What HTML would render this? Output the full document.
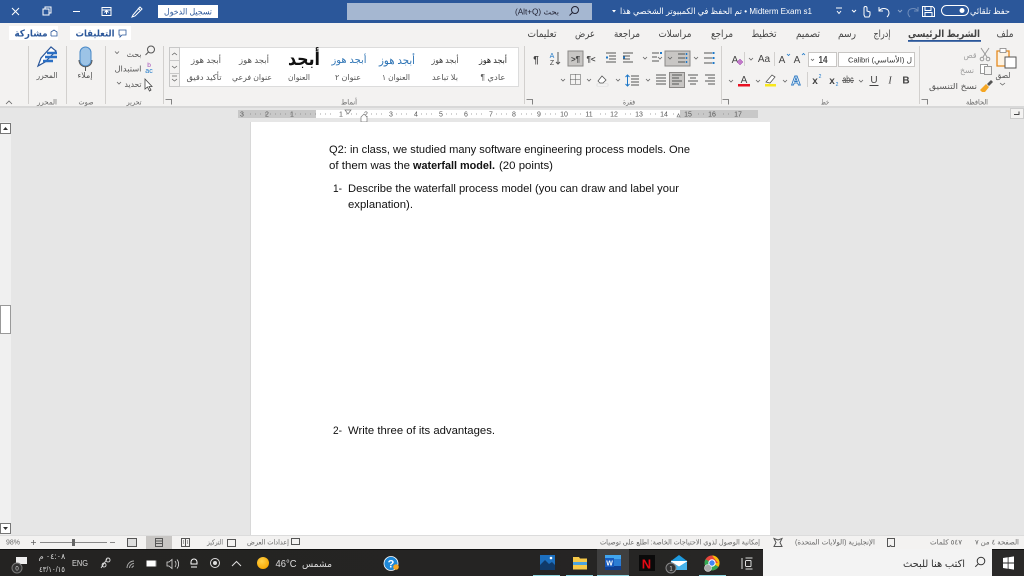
<!DOCTYPE html>
<html><head><meta charset="utf-8"><style>
html,body{margin:0;padding:0;width:1024px;height:576px;overflow:hidden;background:#e6e6e6}
svg{display:block;font-family:"Liberation Sans","DejaVu Sans",sans-serif;filter:blur(.3px)}
.m{text-anchor:middle}
.g{fill:#555;font-size:8px}
.d{fill:#444;font-size:9px}
.tab{fill:#444;font-size:10px;text-anchor:middle}
.doc{fill:#111;font-size:11px}
.s{fill:#666;font-size:7px;text-anchor:middle}
.r{fill:#555;font-size:7px;text-anchor:middle}
.ic{fill:none;stroke:#555;stroke-width:1}
.w{fill:none;stroke:#fff;stroke-width:1}
.c{fill:none;stroke:#666;stroke-width:.8}
.f{fill:#444;font-size:10px;text-anchor:middle}
</style></head><body>
<svg width="1024" height="576" viewBox="0 0 1024 576" xmlns="http://www.w3.org/2000/svg">
<rect width="1024" height="576" fill="#e6e6e6"/>
<!-- title bar -->
<rect width="1024" height="23" fill="#2b579a"/>
<path class="w" d="M12 8l7 7M19 8l-7 7"/>
<path class="w" d="M43 9h6v6h-6zM45 9V7h6v6h-2"/>
<path class="w" d="M73 11.500h7"/>
<path class="w" d="M102 7.500h9v8h-9zM102 10h9M106.500 14v-3M104.500 12.500l2-2 2 2"/>
<path class="w" d="M133 15l7-8 2 2-7 7-3 1zM138 8l2 2"/>
<rect x="158" y="5" width="60" height="13" fill="#fff"/>
<text x="188" y="14.500" class="m" font-size="8.500" fill="#2b579a" textLength="48" lengthAdjust="spacingAndGlyphs">تسجيل الدخول</text>
<rect x="347" y="3" width="245" height="17" fill="#a5b7d1"/>
<text x="537" y="14.500" class="m" font-size="8" fill="#223" textLength="44" lengthAdjust="spacingAndGlyphs">(Alt+Q) بحث</text>
<circle cx="575" cy="10" r="3.500" fill="none" stroke="#223"/><path d="M572.500 12.500l-3 3" stroke="#223" fill="none"/>
<path d="M612 10h4l-2 2.500z" fill="#fff"/>
<text x="716" y="14" class="m" font-size="8.500" fill="#fff" textLength="192" lengthAdjust="spacingAndGlyphs">تم الحفظ في الكمبيوتر الشخصي هذا • Midterm Exam s1</text>
<path class="w" d="M836 8h6M837 11l2 2.500 2-2.500M852 10l2 2 2-2"/>
<path class="w" d="M864 15v-7a1.500 1.500 0 0 1 3 0v3l3 1v3l-1 2h-4z"/>
<path class="w" d="M879 7v4h4M879 11c3-4 10-3 10 2 0 2-1 3-2 4"/>
<path d="M898 10l2 2 2-2" fill="none" stroke="#8aa3c8"/>
<path d="M918 7v4h-4M918 11c-3-4-10-3-10 2 0 2 1 3 2 4" fill="none" stroke="#6f8dbb"/>
<path class="w" d="M922.500 6.500h10l2 2v8h-12zM925 6.500v4h6v-4M925 16.500v-4h7v4"/>
<rect x="941.500" y="5.500" width="27" height="10" rx="5" fill="none" stroke="#fff"/>
<circle cx="962" cy="10.500" r="2.500" fill="#fff"/>
<text x="990" y="14" class="m" font-size="8.500" fill="#fff" textLength="40" lengthAdjust="spacingAndGlyphs">حفظ تلقائي</text>
<!-- ribbon -->
<rect y="23" width="1024" height="83" fill="#f3f2f1"/>
<rect y="106" width="1024" height="2" fill="#d8d8d8"/>
<rect x="9" y="26" width="49" height="14" fill="#fff"/>
<rect x="70" y="26" width="61" height="14" fill="#fff"/>
<text x="31" y="36.500" class="m" font-size="9.500" font-weight="bold" fill="#2b579a" textLength="33" lengthAdjust="spacingAndGlyphs">مشاركة</text>
<path d="M51 36v-4l3-2 3 2v4h-6" fill="none" stroke="#2b579a" stroke-width=".8"/>
<text x="95" y="36.500" class="m" font-size="9.500" font-weight="bold" fill="#2b579a" textLength="39" lengthAdjust="spacingAndGlyphs">التعليقات</text>
<path d="M119 30h7v5h-4l-2 2v-2h-1z" fill="none" stroke="#2b579a" stroke-width=".8"/>
<text x="1005" y="37" class="tab" textLength="17" lengthAdjust="spacingAndGlyphs">ملف</text>
<text x="944" y="37" class="tab" font-weight="bold" fill="#333" textLength="72" lengthAdjust="spacingAndGlyphs">الشريط الرئيسي</text>
<rect x="908" y="40" width="73" height="1.800" fill="#2b579a"/>
<text x="882" y="37" class="tab" textLength="17" lengthAdjust="spacingAndGlyphs">إدراج</text>
<text x="847" y="37" class="tab" textLength="18" lengthAdjust="spacingAndGlyphs">رسم</text>
<text x="808" y="37" class="tab" textLength="24" lengthAdjust="spacingAndGlyphs">تصميم</text>
<text x="764" y="37" class="tab" textLength="25" lengthAdjust="spacingAndGlyphs">تخطيط</text>
<text x="722" y="37" class="tab" textLength="22" lengthAdjust="spacingAndGlyphs">مراجع</text>
<text x="675" y="37" class="tab" textLength="33" lengthAdjust="spacingAndGlyphs">مراسلات</text>
<text x="627" y="37" class="tab" textLength="26" lengthAdjust="spacingAndGlyphs">مراجعة</text>
<text x="585" y="37" class="tab" textLength="20" lengthAdjust="spacingAndGlyphs">عرض</text>
<text x="542" y="37" class="tab" textLength="29" lengthAdjust="spacingAndGlyphs">تعليمات</text>
<!-- separators -->
<path d="M28.500 46v58M66.500 46v58M105.500 46v58M163.500 46v58M524.500 46v58M721.500 46v58M919.500 46v58" stroke="#d2d0ce"/>
<!-- group labels -->
<text x="47" y="104.500" class="s" textLength="20" lengthAdjust="spacingAndGlyphs">المحرر</text>
<text x="86" y="104.500" class="s" textLength="15" lengthAdjust="spacingAndGlyphs">صوت</text>
<text x="134" y="104.500" class="s" textLength="15" lengthAdjust="spacingAndGlyphs">تحرير</text>
<text x="349" y="104.500" class="s" textLength="16" lengthAdjust="spacingAndGlyphs">أنماط</text>
<text x="629" y="104.500" class="s" textLength="12" lengthAdjust="spacingAndGlyphs">فقرة</text>
<text x="825" y="104.500" class="s" textLength="8" lengthAdjust="spacingAndGlyphs">خط</text>
<text x="977" y="104.500" class="s" textLength="22" lengthAdjust="spacingAndGlyphs">الحافظة</text>
<path d="M6 104l3-3 3 3" class="c"/>
<path class="c" d="M165.500 99.500h6v5M526.500 99.500h6v5M722.500 99.500h6v5M921.500 99.500h6v5"/>
<!-- editor -->
<path d="M38 66l3-8 10-11 5 4-11 11z" fill="#fff" stroke="#2b579a" stroke-width="1.200"/>
<path d="M47 53h10M45 57h12M43 61h10" stroke="#2b6fc4" stroke-width="2.500"/>
<text x="47" y="78" class="g m" textLength="21" lengthAdjust="spacingAndGlyphs">المحرر</text>
<!-- mic -->
<rect x="80" y="47" width="11" height="19" rx="5.500" fill="#9cc3e6" stroke="#4a8ac8"/>
<path d="M79 60c0 9 13 9 13 0M85.500 67v4" class="ic"/>
<text x="85" y="78" class="g m" textLength="15" lengthAdjust="spacingAndGlyphs">إملاء</text>
<!-- editing -->
<circle cx="151" cy="49.500" r="3.500" class="ic"/><path class="ic" d="M148.500 52l-3 3"/>
<text x="134" y="57" class="g m" textLength="15" lengthAdjust="spacingAndGlyphs">بحث</text>
<path class="c" d="M115 51.500l2 2 2-2M117 82l2 2 2-2"/>
<text x="128" y="71.500" class="g m" textLength="27" lengthAdjust="spacingAndGlyphs">استبدال</text>
<text x="149" y="67" class="m" font-size="6.500" fill="#a24bb5">b</text>
<text x="149" y="73" class="m" font-size="7" fill="#1e78c8">ac</text>
<text x="133" y="87" class="g m" textLength="17" lengthAdjust="spacingAndGlyphs">تحديد</text>
<path d="M145 79v10l2.500-2 2 4 1.500-1-2-3.500h3z" fill="#fff" stroke="#444" stroke-width=".8"/>
<!-- gallery -->
<rect x="169.500" y="47.500" width="349" height="39" fill="#fff" stroke="#dcdcdc"/>
<rect x="169.500" y="47.500" width="10" height="39" fill="#f3f2f1" stroke="#c8c8c8"/>
<path d="M169.500 60.500h10M169.500 73.500h10" stroke="#c8c8c8"/>
<path class="c" d="M172 55l2.500-2 2.500 2M172 66l2.500 2 2.500-2M172 76h5M172 79l2.500 2 2.500-2"/>
<g font-size="8.500">
<text x="493" y="63" class="m" fill="#222" textLength="28" lengthAdjust="spacingAndGlyphs">أبجد هوز</text>
<text x="445" y="63" class="m" fill="#444" textLength="27" lengthAdjust="spacingAndGlyphs">أبجد هوز</text>
<text x="397" y="64" class="m" fill="#2e74b5" font-size="11" textLength="36" lengthAdjust="spacingAndGlyphs">أبجد هوز</text>
<text x="349" y="63" class="m" fill="#2e74b5" font-size="9.500" textLength="35" lengthAdjust="spacingAndGlyphs">أبجد هوز</text>
<text x="304" y="65" class="m" fill="#111" font-size="18" font-weight="bold" textLength="32" lengthAdjust="spacingAndGlyphs">أبجد</text>
<text x="254" y="63" class="m" fill="#555" textLength="30" lengthAdjust="spacingAndGlyphs">أبجد هوز</text>
<text x="206" y="63" class="m" fill="#555" textLength="30" lengthAdjust="spacingAndGlyphs">أبجد هوز</text>
</g>
<text x="493" y="80" class="g m" textLength="25" lengthAdjust="spacingAndGlyphs">¶ عادي</text>
<text x="445" y="80" class="g m" textLength="26" lengthAdjust="spacingAndGlyphs">بلا تباعد</text>
<text x="396" y="80" class="g m" textLength="28" lengthAdjust="spacingAndGlyphs">العنوان ١</text>
<text x="348" y="80" class="g m" textLength="26" lengthAdjust="spacingAndGlyphs">عنوان ٢</text>
<text x="299" y="80" class="g m" textLength="22" lengthAdjust="spacingAndGlyphs">العنوان</text>
<text x="252" y="80" class="g m" textLength="40" lengthAdjust="spacingAndGlyphs">عنوان فرعي</text>
<text x="204" y="80" class="g m" textLength="35" lengthAdjust="spacingAndGlyphs">تأكيد دقيق</text>
<!-- paragraph row 1 -->
<text x="536" y="63" class="f" font-size="12" font-weight="bold">¶</text>
<text x="552" y="58" class="m" font-size="7" fill="#1e78c8">A</text>
<text x="552" y="65" class="m" font-size="7" fill="#444">Z</text>
<path class="ic" d="M558 52v12M556 62l2 2 2-2"/>
<rect x="568" y="51" width="15" height="15" fill="#c8c6c4" stroke="#8a8886"/>
<text x="575.500" y="62" class="m" font-size="8" font-weight="bold" fill="#444">&gt;¶</text>
<text x="591" y="62" class="m" font-size="8" font-weight="bold" fill="#444">¶&lt;</text>
<path class="ic" d="M606 53h10M609 56h7M609 59h7M606 62h10M633 53h-10M633 62h-10M630 56h-7M630 59h-7"/>
<path d="M606 57.500l2 0M623 57.500h2" stroke="#1e78c8" stroke-width="2"/>
<path class="c" d="M643 57l2 2 2-2M658 57l2 2 2-2M694 57l2 2 2-2"/>
<path class="ic" d="M652 53h7M652 57h5M652 61h7"/><rect x="660" y="52" width="2" height="2" fill="#1e78c8"/>
<rect x="665" y="51" width="25" height="15" fill="#c8c6c4" stroke="#8a8886"/>
<path class="c" d="M668 57l2 2 2-2"/><path class="ic" d="M678 54h7M678 58h7M678 62h7"/><path d="M686.500 53v10" stroke="#1e78c8" stroke-width="1.500" stroke-dasharray="2 2"/>
<path class="ic" d="M704 53h8M704 58h8M704 63h8"/><path d="M713.500 52v12" stroke="#1e78c8" stroke-width="2" stroke-dasharray="2 3"/>
<!-- paragraph row 2 -->
<path class="c" d="M561 79l2 2 2-2M587 79l2 2 2-2M616 79l2 2 2-2M646 79l2 2 2-2"/>
<path class="ic" d="M570.500 74.500h10v10h-10zM575.500 74.500v10M570.500 79.500h10" stroke-dasharray="1 1"/>
<path d="M598 81l4-5 4 4-3 3h-3z" fill="#fff" stroke="#555" stroke-width=".8"/><rect x="597" y="84" width="11" height="2" fill="#fff" stroke="#ccc" stroke-width=".5"/>
<path class="ic" d="M631 76h8M631 79h8M631 82h8M631 85h8"/><path d="M627.500 75v11M625.500 77l2-2 2 2M625.500 84l2 2 2-2" fill="none" stroke="#1e78c8"/>
<path class="ic" d="M656 75h10M656 78h10M656 81h10M656 84h10"/>
<rect x="669.500" y="72.500" width="15" height="15" fill="#c8c6c4" stroke="#8a8886"/>
<path class="ic" d="M672 75h10M672 78h7M672 81h10M672 84h7M688 75h10M690 78h6M688 81h10M690 84h6M705 75h10M708 78h7M705 81h10M708 84h7"/>
<!-- font -->
<path class="c" d="M729 80l2 2 2-2M756 80l2 2 2-2M783 80l2 2 2-2M859 80l2 2 2-2M749 58l2 2 2-2"/>
<text x="735" y="63" class="f" font-size="12" fill="#555">A</text>
<path d="M737 62l3-3 3 3-3 3z" fill="#c27ac9" stroke="#a24bb5" stroke-width=".5"/>
<path d="M744.500 52v14M774.500 52v14M807.500 72v15" stroke="#d2d0ce"/>
<text x="764" y="62" class="f">Aa</text>
<text x="782" y="63" class="f" font-size="11">A</text>
<text x="797" y="63" class="f" font-size="13">A</text>
<path d="M787 54l1.500 1.500 1.500-1.500M802 55l1.500-1.500 1.500 1.500" fill="none" stroke="#1e78c8" stroke-width=".8"/>
<rect x="808.500" y="52.500" width="28" height="14" fill="#fff" stroke="#c8c6c4"/>
<path class="c" d="M811 59l1.500 1.500 1.500-1.500M841 59l1.500 1.500 1.500-1.500"/>
<text x="823" y="63" class="f" font-size="8.500" font-weight="bold" textLength="9" lengthAdjust="spacingAndGlyphs">14</text>
<rect x="838.500" y="52.500" width="76" height="14" fill="#fff" stroke="#c8c6c4"/>
<text x="880" y="62.500" class="m" font-size="7.500" fill="#333" textLength="64" lengthAdjust="spacingAndGlyphs">Calibri (الأساسي) ل</text>
<text x="744" y="83" class="f" font-size="10">A</text><rect x="738" y="84" width="12" height="2.500" fill="#e81123"/>
<path d="M766 82l6-7 3 2-5 6z" fill="#fff" stroke="#555" stroke-width=".8"/><rect x="765" y="84" width="11" height="2.500" fill="#f8e71c"/>
<text x="796" y="85" class="m" font-size="13" font-weight="bold" fill="#fff" stroke="#2b78c2" stroke-width=".9">A</text>
<text x="815" y="84" class="f" font-size="9" font-weight="bold">x</text><text x="820" y="78" class="m" font-size="5" fill="#1e78c8">2</text>
<text x="832" y="84" class="f" font-size="9" font-weight="bold">x</text><text x="837" y="86" class="m" font-size="5" fill="#1e78c8">2</text>
<text x="848" y="83" class="f" font-size="7.500" fill="#666" textLength="11" lengthAdjust="spacingAndGlyphs">abc</text><path d="M842 80.500h12" stroke="#666"/>
<text x="874" y="83" class="f" font-size="9.500">U</text><path d="M869.500 85.500h9" stroke="#444"/>
<text x="890" y="83.500" class="f" font-style="italic" font-family="Liberation Serif">I</text>
<text x="906" y="83.500" class="f" font-weight="bold">B</text>
<!-- clipboard -->
<path d="M997 51h12v15h-12z" fill="#fdf3e3" stroke="#e58a1f" stroke-width="1.300"/><rect x="1000" y="48.500" width="6" height="4" fill="#fff" stroke="#777" stroke-width=".7"/>
<rect x="1005" y="57" width="11" height="11" fill="#fff" stroke="#555"/>
<text x="1003" y="78" class="g m" textLength="15" lengthAdjust="spacingAndGlyphs">لصق</text>
<path class="c" d="M1000 83l2.500 2 2.500-2"/>
<path d="M981 48l6 9M989 48l-6 9" fill="none" stroke="#999"/><circle cx="982" cy="59" r="1.800" fill="none" stroke="#999"/><circle cx="988" cy="59" r="1.800" fill="none" stroke="#999"/>
<text x="970" y="58" class="g m" style="fill:#a0a0a0" textLength="13" lengthAdjust="spacingAndGlyphs">قص</text>
<rect x="980.500" y="64.500" width="7" height="9" fill="#fff" stroke="#999"/><rect x="984.500" y="66.500" width="7" height="8" fill="#f3f2f1" stroke="#999"/>
<text x="967" y="73" class="g m" style="fill:#a0a0a0" textLength="14" lengthAdjust="spacingAndGlyphs">نسخ</text>
<path d="M980 90l6-6 3 3-4 5h-3z" fill="#f5a623"/><path d="M987 84l4-4 2 2-4 4z" fill="#555"/>
<text x="953" y="89" class="g m" textLength="48" lengthAdjust="spacingAndGlyphs">نسخ التنسيق</text>
<!-- ruler -->
<rect x="238" y="110" width="78" height="8" fill="#c8c8c8"/>
<rect x="316" y="110" width="364" height="8" fill="#fff"/>
<rect x="680" y="110" width="78" height="8" fill="#c8c8c8"/>
<g>
<text class="r" x="242" y="116.500">3</text><text class="r" x="267" y="116.500">2</text><text class="r" x="292" y="116.500">1</text>
<text class="r" x="341" y="116.500">1</text><text class="r" x="366" y="116.500">2</text><text class="r" x="391" y="116.500">3</text><text class="r" x="416" y="116.500">4</text><text class="r" x="441" y="116.500">5</text><text class="r" x="466" y="116.500">6</text><text class="r" x="491" y="116.500">7</text><text class="r" x="514" y="116.500">8</text><text class="r" x="539" y="116.500">9</text><text class="r" x="564" y="116.500">10</text><text class="r" x="589" y="116.500">11</text><text class="r" x="614" y="116.500">12</text><text class="r" x="639" y="116.500">13</text><text class="r" x="664" y="116.500">14</text><text class="r" x="688" y="116.500">15</text><text class="r" x="712" y="116.500">16</text><text class="r" x="738" y="116.500">17</text>
</g>
<path d="M250 114h85M346 114h15M371 114h15M396 114h15M421 114h15M446 114h15M471 114h15M496 114h15M521 114h15M545 114h15M575 114h10M600 114h10M625 114h10M650 114h8M673 114h10M698 114h10M723 114h10" stroke="#888" stroke-width=".7" stroke-dasharray="1 4"/>
<path d="M345 110h6l-3 4z" fill="#fff" stroke="#777" stroke-width=".7"/>
<path d="M361 117l3-3 3 3v5h-6z" fill="#fff" stroke="#777" stroke-width=".7"/>
<path d="M680 117l-3-.1 1.500-3 1.500 3z" fill="#fff" stroke="#777" stroke-width=".7"/>
<rect x="1010.500" y="108.500" width="13" height="10" fill="#f3f2f1" stroke="#ccc"/><path d="M1014 114.500h5v-3" fill="none" stroke="#444"/>
<!-- page -->
<rect x="250" y="122" width="520" height="413" fill="#fff"/>
<rect x="250" y="122" width="1" height="413" fill="#d8d8d8"/>
<!-- left scroll -->
<rect x="0" y="122" width="11" height="413" fill="#f0f0f0"/>
<rect x="0.500" y="123.500" width="10" height="10" fill="#fff" stroke="#777"/><path d="M3 130l2.500-3 2.500 3z" fill="#333"/>
<rect x="0.500" y="305.500" width="10" height="28" fill="#fff" stroke="#999"/>
<rect x="0.500" y="523.500" width="10" height="10" fill="#fff" stroke="#777"/><path d="M3 527l2.500 3 2.500-3z" fill="#333"/>
<!-- doc text -->
<text x="329" y="153" class="doc" textLength="361" lengthAdjust="spacingAndGlyphs">Q2: in class, we studied many software engineering process models. One</text>
<text x="329" y="169" class="doc" textLength="81" lengthAdjust="spacingAndGlyphs">of them was the</text>
<text x="413" y="169" class="doc" font-weight="bold" textLength="82" lengthAdjust="spacingAndGlyphs">waterfall model.</text>
<text x="499" y="169" class="doc" textLength="54" lengthAdjust="spacingAndGlyphs">(20 points)</text>
<text x="333" y="192" class="doc" textLength="9" lengthAdjust="spacingAndGlyphs">1-</text>
<text x="348" y="192" class="doc" textLength="331" lengthAdjust="spacingAndGlyphs">Describe the waterfall process model (you can draw and label your</text>
<text x="348" y="208" class="doc" textLength="65" lengthAdjust="spacingAndGlyphs">explanation).</text>
<text x="333" y="434" class="doc" textLength="9" lengthAdjust="spacingAndGlyphs">2-</text>
<text x="348" y="434" class="doc" textLength="147" lengthAdjust="spacingAndGlyphs">Write three of its advantages.</text>
<!-- status bar -->
<rect y="535" width="1024" height="14" fill="#f3f2f1"/>
<rect y="535" width="1024" height="1" fill="#dcdcdc"/>
<text x="13" y="544.500" class="s" textLength="14" lengthAdjust="spacingAndGlyphs">98%</text>
<path d="M31 542.500h5M33.500 540v5M40 542.500h67M110 542.500h5" stroke="#666" stroke-width=".8"/>
<rect x="72" y="539" width="3" height="7" fill="#666"/>
<rect x="146" y="536" width="26" height="13" fill="#c8c6c4"/>
<rect x="127.500" y="538.500" width="9" height="8" fill="#ddd" stroke="#555"/>
<path class="ic" d="M155.500 538.500h7v8h-7zM155.500 541h7M155.500 543.500h7"/>
<path class="ic" d="M181.500 538.500h8v8h-8zM185.500 538.500v8M183 541h1M187 541h1M183 543h1M187 543h1"/>
<text x="215" y="544.500" class="s" textLength="16" lengthAdjust="spacingAndGlyphs">التركيز</text>
<path class="ic" d="M227.500 539.500h8v7h-8z"/>
<text x="268" y="544.500" class="s" textLength="42" lengthAdjust="spacingAndGlyphs">إعدادات العرض</text>
<path class="ic" d="M291.500 538.500h8v6h-8z"/>
<text x="680" y="544.500" class="s" textLength="160" lengthAdjust="spacingAndGlyphs">إمكانية الوصول لذوي الاحتياجات الخاصة: اطلع على توصيات</text>
<path class="ic" d="M774 538.500l4 1.500 4-1.500-2 4 2 4h-8l2-4z"/>
<text x="835" y="544.500" class="s" textLength="80" lengthAdjust="spacingAndGlyphs">الإنجليزية (الولايات المتحدة)</text>
<path class="ic" d="M887.500 538.500h7v8h-3l-1-1-1 1h-2z"/>
<text x="946" y="544.500" class="s" textLength="32" lengthAdjust="spacingAndGlyphs">٥٤٧ كلمات</text>
<text x="997" y="544.500" class="s" textLength="44" lengthAdjust="spacingAndGlyphs">الصفحة ٤ من ٧</text>
<!-- taskbar -->
<defs><linearGradient id="tb" x1="0" x2="1" y1="0" y2="0"><stop offset="0" stop-color="#242322"/><stop offset=".5" stop-color="#252423"/><stop offset="1" stop-color="#2a2928"/></linearGradient></defs>
<rect y="549" width="1024" height="27" fill="url(#tb)"/>
<rect y="549" width="1024" height="1" fill="#111"/>
<path d="M16 557h11v7h-6l-2 2v-2h-3z" fill="#eee"/>
<circle cx="17" cy="568" r="5" fill="#333" stroke="#777"/><text x="17" y="570.500" class="m" font-size="6" fill="#ddd">0</text>
<text x="52" y="559" class="m" font-size="8" fill="#ddd">٠٤:٠٨ م</text>
<text x="52" y="572" class="m" font-size="8" fill="#ddd" textLength="26" lengthAdjust="spacingAndGlyphs">٤٣/١٠/١٥</text>
<text x="80" y="566" class="m" font-size="8.500" fill="#ddd" textLength="16" lengthAdjust="spacingAndGlyphs">ENG</text>
<path d="M101 568l6-9M104 567a2 2 0 1 1 .1 0M108 562a2 2 0 1 1 .1 0" fill="none" stroke="#ddd" stroke-width=".9"/>
<path d="M127 568a7 7 0 0 1 7-7M129.500 568a4.500 4.500 0 0 1 4.500-4.500M132 568a2 2 0 0 1 2-2" fill="none" stroke="#aaa"/>
<rect x="146.500" y="560.500" width="9" height="6" fill="#fff"/><rect x="155.500" y="560.500" width="1" height="6" fill="#888"/>
<path d="M167 562h2l3-2.500v9l-3-2.500h-2zM175 561a5 5 0 0 1 0 6M177 559.500a7 7 0 0 1 0 9" fill="none" stroke="#ddd" stroke-width=".8"/>
<path class="w" d="M191 562a3 3 0 0 1 6 0v2h-6zM191 567h6" stroke-width=".9"/>
<circle cx="215" cy="563" r="4.500" fill="none" stroke="#ddd"/><circle cx="215" cy="563" r="2" fill="#ddd"/>
<path d="M232 566l4.500-4.500 4.500 4.500" fill="none" stroke="#ddd"/>
<defs><radialGradient id="sun" cx=".4" cy=".35" r=".7"><stop offset="0" stop-color="#ffd24a"/><stop offset="1" stop-color="#f7a600"/></radialGradient></defs>
<circle cx="263" cy="563" r="6" fill="url(#sun)"/>
<text x="286" y="567" class="m" font-size="10" fill="#ddd" textLength="21" lengthAdjust="spacingAndGlyphs">46°C</text>
<text x="317" y="567" class="m" font-size="9" fill="#ddd" textLength="30" lengthAdjust="spacingAndGlyphs">مشمس</text>
<circle cx="391" cy="563.500" r="7" fill="#1e88d8" stroke="#fff" stroke-width=".8"/><text x="391" y="567.500" class="m" font-size="11" font-weight="bold" fill="#fff">?</text><circle cx="396" cy="567" r="2.800" fill="#f5a623"/>
<!-- taskbar apps -->
<rect x="540" y="555" width="15" height="15" fill="#1c6fbf"/><path d="M540 570v-5l5-5 4 4 3-2 3 3v5z" fill="#103a6a"/><circle cx="551" cy="558" r="1.300" fill="#fff"/>
<rect x="533" y="575" width="27" height="1" fill="#8fd5e0"/>
<path d="M573 557h6l1 1.500h7v11h-14z" fill="#f7c948"/><rect x="573" y="562" width="14" height="3" fill="#4ba3e0"/>
<rect x="566" y="575" width="27" height="1" fill="#8fd5e0"/>
<rect x="597" y="549" width="32" height="27" fill="#3f3f3f"/>
<rect x="605" y="555" width="16" height="15" rx="1" fill="#2b7cd3"/><rect x="605" y="555" width="16" height="4" fill="#41a5ee"/><rect x="605" y="566" width="16" height="4" fill="#103f91"/>
<rect x="605" y="558" width="9" height="9" fill="#185abd"/><text x="609.500" y="565.500" class="m" font-size="7" font-weight="bold" fill="#fff">W</text>
<rect x="597" y="575" width="32" height="1" fill="#8fd5e0"/>
<rect x="639" y="555" width="16" height="16" fill="#0a0a0a"/><text x="646.500" y="568.500" class="m" font-size="13" font-weight="bold" fill="#e50914">N</text>
<path d="M671 561l8-6 8 6v9h-16z" fill="#1e9be0"/><path d="M671 561l8 5 8-5" fill="#fff" stroke="#fff"/><path d="M671 562l8 5 8-5v8h-16z" fill="#48b4ec"/>
<circle cx="671" cy="568" r="5" fill="#333" stroke="#888"/><text x="671" y="570.500" class="m" font-size="6" fill="#ddd">1</text>
<circle cx="712" cy="563" r="7.500" fill="#e8453c"/><path d="M712 563l6.500 3.800a7.500 7.500 0 0 1-10.500 2.500z" fill="#34a853"/><path d="M712 563l-4 6.300a7.500 7.500 0 0 1-2.500-10z" fill="#34a853"/><path d="M712 555.500a7.500 7.500 0 0 1 6.500 11.300l-6.500-3.800h6z" fill="#fbbc05"/><circle cx="712" cy="563" r="3.200" fill="#4285f4" stroke="#fff"/>
<circle cx="708" cy="568" r="3.500" fill="#aaa" stroke="#eee" stroke-width=".6"/>
<rect x="699" y="575" width="27" height="1" fill="#8fd5e0"/>
<path d="M742 558v11M746 560.500h5M746 566.500h5M745.500 558h7M745.500 569h7M745.500 560.500v6M751 560.500v6" fill="none" stroke="#ddd"/>
<!-- search box -->
<rect x="763" y="549" width="229" height="27" fill="#f3f3f3"/>
<text x="934" y="567" class="m" font-size="10" fill="#333" textLength="62" lengthAdjust="spacingAndGlyphs">اكتب هنا للبحث</text>
<circle cx="981" cy="561" r="3.800" fill="none" stroke="#333"/><path d="M978.300 563.800l-3 3" stroke="#333"/>
<path d="M1003 558l4.700-.7v5.200h-4.700zM1008.500 557.200l5.500-.8v6.100h-5.500zM1003 563.500h4.700v5.200l-4.700-.7zM1008.500 563.500h5.500v6.100l-5.500-.8z" fill="#fff"/>
</svg>
</body></html>
